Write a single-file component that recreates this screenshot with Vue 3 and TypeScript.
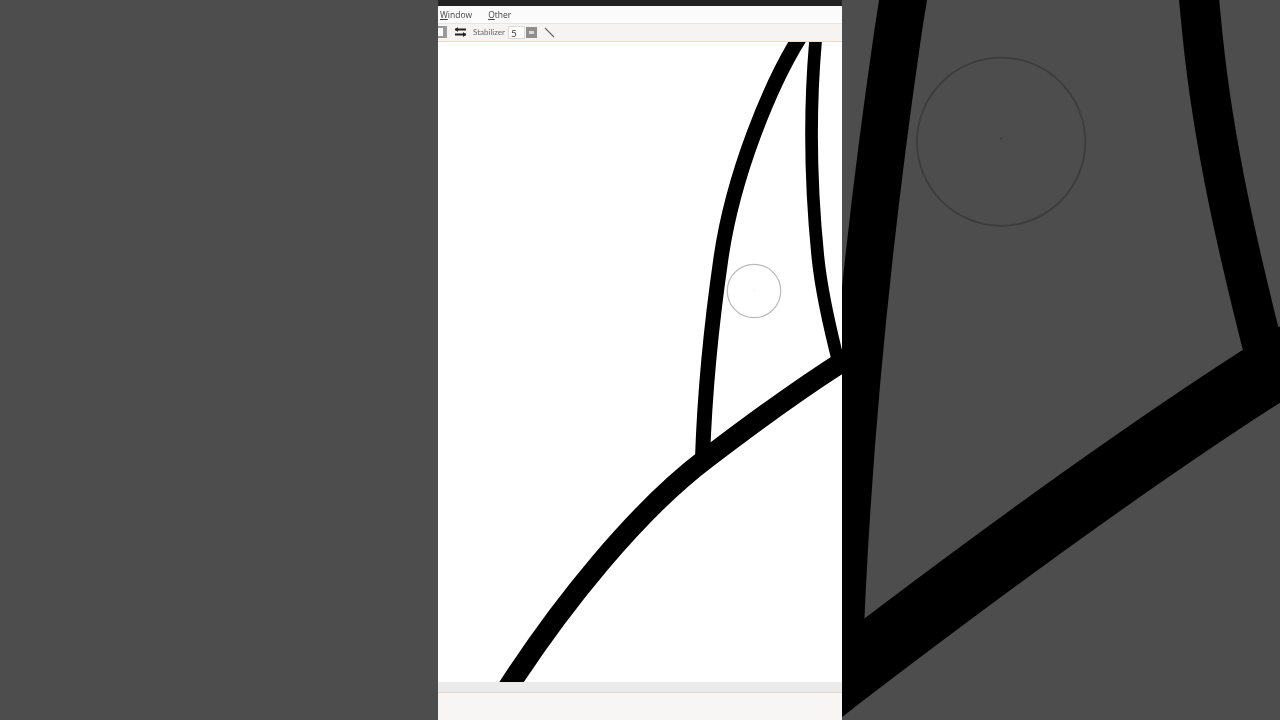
<script setup lang="ts">
const strokes = [
  { d: 'M800 37 C770 85 733 175 721 258 C712 320 705 385 702.5 458', w: 15 },
  { d: 'M816 36 C811 90 809 170 818 258 C821.5 292 829 325 839 364', w: 12.7 },
  { d: 'M500 700 C560 605 638 510 707 458 C745 429 800 388 850 357', w: 20.5 }
]
const views = [
  { cls: 'sketch', box: '438 42 404 640' },
  { cls: 'zoomed', box: '703.5 246 139 228.6' }
]
</script>

<template>
  <div class="stage">
    <div class="side"></div>
    <main class="app">
      <div class="titlebar"></div>
      <nav class="menu">
        <span class="menu-item"><u>W</u>indow</span>
        <span class="menu-item"><u>O</u>ther</span>
      </nav>
      <div class="toolbar">
        <span class="swatch"></span>
        <svg class="swap" width="11" height="10" viewBox="0 0 11 10">
          <path d="M0 2.5h11M0 7.5h11" stroke="#222" stroke-width="1.8" />
          <path d="M3 0 0 2.5 3 5M8 5 11 7.5 8 10" fill="#222" />
        </svg>
        <span class="label">Stabilizer</span>
        <span class="field">5</span>
        <span class="spin"><i></i></span>
        <svg class="line-tool" width="11" height="11" viewBox="0 0 11 11">
          <path d="M1 1 10 10" stroke="#666" stroke-width="1.1" />
        </svg>
      </div>
      <div class="canvas">
        <svg class="art" :viewBox="views[0].box" preserveAspectRatio="none">
          <path v-for="s in strokes" :key="s.d" :d="s.d" :stroke-width="s.w" fill="none" stroke="#000" />
          <circle cx="754" cy="291" r="26.7" fill="none" stroke="#b8b8b8" stroke-width="1.2" />
          <circle cx="754" cy="290" r="0.5" fill="#ccc" />
        </svg>
      </div>
      <div class="scrollbar"></div>
      <div class="footer"></div>
    </main>
    <div class="side zoom">
      <svg class="art" :viewBox="views[1].box" preserveAspectRatio="none">
        <path v-for="s in strokes" :key="s.d" :d="s.d" :stroke-width="s.w" fill="none" stroke="#000" />
        <circle cx="754" cy="291" r="26.7" fill="none" stroke="#3c3c3c" stroke-width="0.55" />
        <circle cx="754" cy="290" r="0.4" fill="#3e3e3e" />
      </svg>
    </div>
  </div>
</template>

<style>
html, body { margin: 0; background: #4d4d4d; }
</style>

<style scoped>
.stage {
  display: grid;
  grid-template-columns: 438px 404px 438px;
  width: 1280px;
  height: 720px;
  overflow: hidden;
  font-family: "Open Sans", "Liberation Sans", sans-serif;
}
.side { background: #4d4d4d; }
.zoom { overflow: hidden; }
.app {
  display: flex;
  flex-direction: column;
  background: #fff;
  overflow: hidden;
}
.titlebar { height: 6px; background: #222; flex: none; }
.menu {
  height: 18px;
  flex: none;
  display: flex;
  align-items: center;
  gap: 16px;
  padding-left: 2px;
  background: #fbfbfb;
  border-bottom: 1px solid #e6e6e6;
  font-size: 8.5px;
  color: #444;
  box-sizing: border-box;
  filter: blur(0.25px);
}
.toolbar {
  height: 18px;
  flex: none;
  display: flex;
  align-items: center;
  padding-bottom: 1px;
  background: #f5f4f3;
  border-bottom: 1px solid #f2d9c4;
  box-sizing: border-box;
  font-family: Lato, "Open Sans", sans-serif;
  font-size: 8px;
  color: #666;
  filter: blur(0.25px);
}
.swatch {
  width: 13px;
  height: 12px;
  margin-left: -4px;
  background: #fff;
  border: solid #9a9a9a;
  border-width: 2px 4px 2px 4px;
  box-sizing: border-box;
}
.swap { margin-left: 8px; }
.label { margin-left: 7px; width: 35px; white-space: nowrap; }
.field {
  width: 17px;
  height: 13px;
  line-height: 12px;
  padding-left: 2px;
  box-sizing: border-box;
  background: #fff;
  border: 1px solid #dcdcdc;
  font-size: 10px;
  color: #444;
}
.spin {
  width: 11px;
  height: 11px;
  margin-left: 1px;
  background: #8e8e8e;
  display: flex;
  align-items: center;
  justify-content: center;
}
.spin i { width: 5px; height: 3px; background: #d8d8d8; }
.line-tool { margin-left: 7px; }
.canvas { flex: none; height: 640px; background: #fff; overflow: hidden; }
.art { display: block; width: 100%; height: 100%; }
.scrollbar {
  height: 11px;
  flex: none;
  background: #ebebeb;
  border-bottom: 1px solid #e3d5c8;
  box-sizing: border-box;
}
.footer { flex: 1; background: #f7f6f4; }
</style>
